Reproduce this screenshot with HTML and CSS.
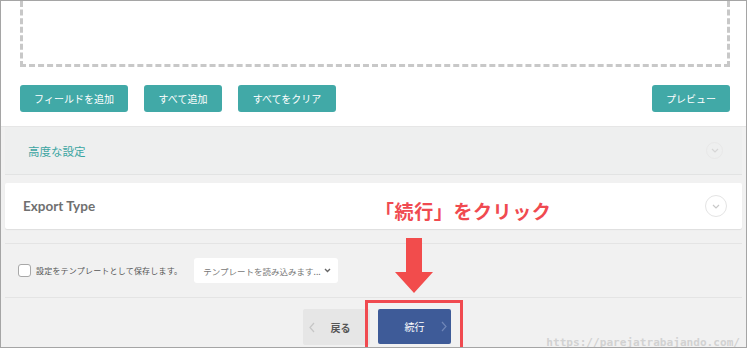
FILE: index.html
```html
<!DOCTYPE html>
<html lang="ja">
  <head>
    <meta charset="UTF-8" />
    <meta name="viewport" content="width=device-width, initial-scale=1.0" />
    <title>エクスポート設定</title>
    <link rel="stylesheet" href="styles.css">
  </head>
  <body>
    <div class="frame">
      <div class="fields">
        <div class="dropzone"></div>
        <div class="toolbar">
          <button class="btn-teal add">フィールドを追加</button>
          <button class="btn-teal all">すべて追加</button>
          <button class="btn-teal clear">すべてをクリア</button>
          <button class="btn-teal preview">プレビュー</button>
        </div>
      </div>

      <div class="panel advanced">
        <span class="panel-title">高度な設定</span>
        <span class="toggle small">
          <svg width="8" height="5" viewBox="0 0 8 5"><path d="M1 1l3 3 3-3" fill="none" stroke="#d6d6d6" stroke-width="1.2"/></svg>
        </span>
      </div>

      <div class="panel export">
        <span class="panel-title">Export Type</span>
        <span class="toggle">
          <svg width="8" height="5" viewBox="0 0 8 5"><path d="M1 1l3 3 3-3" fill="none" stroke="#c8c8c8" stroke-width="1.2"/></svg>
        </span>
      </div>

      <div class="options">
        <label class="save">
          <span class="check"></span>
          設定をテンプレートとして保存します。
        </label>
        <div class="select">
          テンプレートを読み込みます...
          <svg width="7" height="5" viewBox="0 0 7 5"><path d="M1 1l2.5 2.5L6 1" fill="none" stroke="#666" stroke-width="1.4"/></svg>
        </div>
      </div>

      <div class="nav">
        <button class="btn-back">
          <svg width="6" height="11" viewBox="0 0 6 11"><path d="M5 1L1 5.5 5 10" fill="none" stroke="#c6c6c6" stroke-width="1.2"/></svg>
          戻る
        </button>
        <button class="btn-next">
          続行
          <svg width="6" height="11" viewBox="0 0 6 11"><path d="M1 1l4 4.5L1 10" fill="none" stroke="#6f86b8" stroke-width="1.2"/></svg>
        </button>
      </div>

      <div class="note">「続行」をクリック</div>
      <div class="arrow">
        <svg width="40" height="56" viewBox="0 0 40 56"><path d="M12 0h16v34h11L20 55 1 34h11z" fill="#f24c4c"/></svg>
      </div>
      <div class="highlight"></div>
      <div class="watermark">https://parejatrabajando.com/</div>
    </div>
  </body>
</html>
```

FILE: styles.css
```css
body {
  margin: 0;
  background-color: #ffffff;
  font-family: "Lato", "Noto Sans CJK JP", sans-serif;
}
.frame {
  position: relative;
  width: 745px;
  height: 346px;
  border: 1px solid #a5a5a5;
  background-color: #f1f1f1;
  overflow: hidden;
}
.fields {
  background-color: #ffffff;
  padding: 0 16px 14px 19px;
  border-bottom: 1px solid #e6e6e6;
}
.dropzone {
  height: 63px;
  border: 3px dashed #c8c8c8;
  border-top: none;
}
.toolbar {
  display: flex;
  gap: 16px;
  margin-top: 18px;
}
.btn-teal {
  height: 27px;
  padding: 0;
  border: none;
  border-radius: 3px;
  background-color: #41a9a7;
  color: #ffffff;
  font-family: "Noto Sans CJK JP", sans-serif;
  font-size: 10px;
}
.btn-teal.add {
  width: 108px;
}
.btn-teal.all {
  width: 78px;
}
.btn-teal.clear {
  width: 98px;
}
.btn-teal.preview {
  width: 78px;
  margin-left: auto;
}
.panel {
  display: flex;
  align-items: center;
  justify-content: space-between;
  margin: 0 4px;
  padding: 0 15px 0 18px;
}
.panel.advanced {
  height: 47px;
  background-color: #eeefef;
  border-bottom: 1px solid #e2e3e3;
  margin-bottom: 8px;
  padding-left: 23px;
}
.panel.advanced .panel-title {
  color: #3ba5a2;
  font-family: "Noto Sans CJK JP", sans-serif;
  font-size: 11.5px;
}
.panel.export {
  height: 46px;
  background-color: #ffffff;
  border-radius: 2px;
  box-shadow: 0 1px 1px rgba(0, 0, 0, 0.08);
}
.panel.export .panel-title {
  color: #707070;
  font-weight: bold;
  font-size: 13.5px;
}
.toggle {
  display: flex;
  align-items: center;
  justify-content: center;
  width: 20px;
  height: 20px;
  border: 1px solid #e4e4e4;
  border-radius: 50%;
}
.toggle.small {
  width: 15px;
  height: 15px;
  border-color: #e8e8e8;
  margin-right: 4px;
}
.options {
  display: flex;
  align-items: center;
  gap: 12px;
  height: 53px;
  margin: 14px 4px 0;
  padding-left: 13px;
  border-top: 1px solid #e4e4e4;
  border-bottom: 1px solid #e4e4e4;
}
.save {
  display: flex;
  align-items: center;
  gap: 5px;
  color: #555555;
  font-family: "Noto Sans CJK JP", sans-serif;
  font-size: 8px;
  letter-spacing: 0.2px;
}
.check {
  width: 11px;
  height: 11px;
  border: 1px solid #a8a8a8;
  border-radius: 3px;
  background-color: #ffffff;
}
.select {
  display: flex;
  align-items: center;
  justify-content: space-between;
  width: 128px;
  height: 25px;
  padding: 0 7px 0 9px;
  border-radius: 3px;
  background-color: #ffffff;
  color: #777777;
  font-family: "Noto Sans CJK JP", sans-serif;
  font-size: 8.5px;
}
.nav {
  display: flex;
  justify-content: center;
  gap: 8px;
  padding: 11px 0 0 0;
}
.btn-back,
.btn-next {
  display: flex;
  align-items: center;
  height: 36px;
  border: none;
  border-radius: 2px;
  font-family: "Noto Sans CJK JP", sans-serif;
  font-size: 10px;
  font-weight: bold;
}
.btn-back {
  width: 67px;
  padding: 0 0 0 6px;
  gap: 16px;
  background-color: #e6e6e6;
  color: #555555;
  margin-left: 6px;
}
.btn-next {
  width: 73px;
  height: 35px;
  padding: 0 0 0 27px;
  gap: 16px;
  background-color: #3e5b98;
  color: #ffffff;
  font-weight: normal;
}
.note {
  position: absolute;
  left: 374px;
  top: 196px;
  color: #f04a50;
  font-family: "Noto Sans CJK JP", sans-serif;
  font-size: 19px;
  font-weight: bold;
  letter-spacing: 0.6px;
}
.arrow {
  position: absolute;
  left: 393px;
  top: 237px;
  line-height: 0;
}
.highlight {
  position: absolute;
  left: 364px;
  top: 299px;
  width: 92px;
  height: 48px;
  border: 3px solid #f04a50;
}
.watermark {
  position: absolute;
  right: 6px;
  bottom: -2px;
  color: #d2d2d2;
  font-family: "DejaVu Sans Mono", monospace;
  font-size: 11.1px;
  font-weight: bold;
}
```
